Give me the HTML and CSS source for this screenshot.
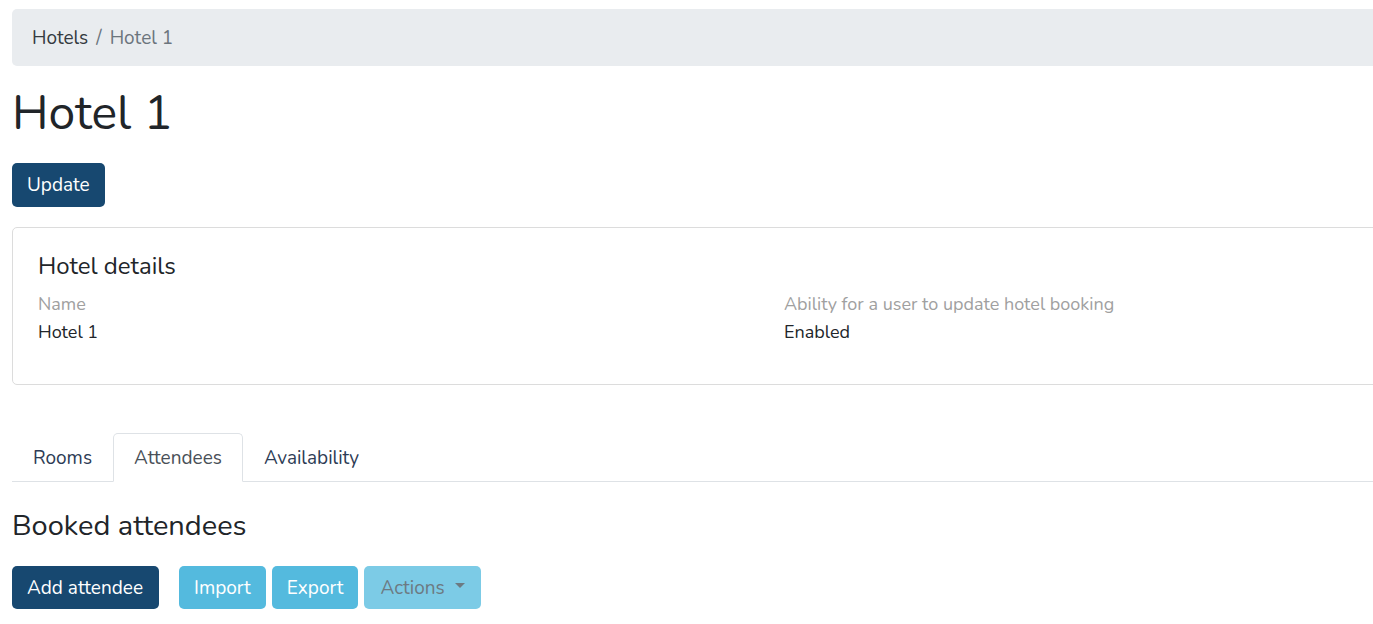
FILE: index.html
```html
<!DOCTYPE html>
<html>
<head>
    <title>Hotel 1</title>
    <link rel="stylesheet" href="styles.css">
</head>
<body>
    <div class="page">
        <nav class="breadcrumb">
            <a class="breadcrumb-link" href="#">Hotels</a>
            <span class="breadcrumb-sep">/</span>
            <span class="breadcrumb-current">Hotel 1</span>
        </nav>

        <h1 class="page-title">Hotel 1</h1>

        <div class="page-actions">
            <button class="btn btn-primary">Update</button>
        </div>

        <div class="card">
            <h2 class="card-title">Hotel details</h2>
            <div class="details-grid">
                <div class="detail">
                    <div class="detail-label">Name</div>
                    <div class="detail-value">Hotel 1</div>
                </div>
                <div class="detail">
                    <div class="detail-label">Ability for a user to update hotel booking</div>
                    <div class="detail-value">Enabled</div>
                </div>
            </div>
        </div>

        <ul class="tabs">
            <li class="tab">Rooms</li>
            <li class="tab tab-active">Attendees</li>
            <li class="tab">Availability</li>
        </ul>

        <h3 class="section-title">Booked attendees</h3>

        <div class="toolbar">
            <button class="btn btn-primary btn-wide">Add attendee</button>
            <div class="btn-group">
                <button class="btn btn-info">Import</button>
                <button class="btn btn-info">Export</button>
                <button class="btn btn-info btn-disabled">Actions <span class="caret"></span></button>
            </div>
        </div>
    </div>
</body>
</html>
```

FILE: styles.css
```css
:root {
    --text-color: #212529;
    --muted-color: #6c757d;
    --label-color: #a0a0a0;
    --primary: #174870;
    --info: #54bade;
    --border-color: #dee2e6;
    --border-radius: 5px;
}

html, body {
    margin: 0;
    padding: 0;
    overflow: hidden;
    background: #fff;
    font-family: 'Nunito', 'Open Sans', sans-serif;
    color: var(--text-color);
}

* {
    box-sizing: border-box;
}

/* the page is wider than the window; the right side is cut off */
.page {
    width: 1568px;
    padding: 9px 12px;
}

.breadcrumb {
    display: flex;
    align-items: center;
    gap: 8px;
    height: 57px;
    padding: 0 20px;
    background: #e9ecef;
    border-radius: var(--border-radius);
    font-size: 19px;
}

.breadcrumb-link {
    color: #343a40;
    text-decoration: none;
}

.breadcrumb-sep,
.breadcrumb-current {
    color: var(--muted-color);
}

.page-title {
    margin: 19px 0 20px 0;
    font-size: 48px;
    font-weight: 400;
    line-height: 1.2;
}

.btn {
    display: inline-flex;
    align-items: center;
    height: 44px;
    padding: 0 15px;
    border: none;
    border-radius: var(--border-radius);
    font-family: inherit;
    font-size: 19px;
    color: #fff;
    cursor: pointer;
}

.btn-wide {
    padding: 0 16px 0 15px;
}

.btn-primary {
    background: var(--primary);
}

.btn-info {
    background: var(--info);
}

.btn-disabled {
    background: #7ccbe6;
    color: #6c7a82;
    padding: 0 16px;
}

.caret {
    display: inline-block;
    margin-left: 10px;
    border-top: 5px solid #6c7a82;
    border-left: 5px solid transparent;
    border-right: 5px solid transparent;
    transform: translateY(-2px);
}

.card {
    margin-top: 20px;
    padding: 24px 25px 38px 25px;
    border: 1px solid #dcdcdc;
    border-radius: var(--border-radius);
}

.card-title {
    margin: 0 0 10px 0;
    font-size: 24px;
    font-weight: 400;
    line-height: 1.2;
}

.details-grid {
    display: grid;
    grid-template-columns: 1fr 1fr;
}

.detail-label {
    font-size: 18px;
    color: var(--label-color);
    line-height: 28px;
}

.detail-value {
    font-size: 18px;
    line-height: 28px;
}

.tabs {
    display: flex;
    margin: 48px 0 0 0;
    padding: 0;
    list-style: none;
    border-bottom: 1px solid var(--border-color);
}

.tab {
    height: 49px;
    display: flex;
    align-items: center;
    padding: 0 20px;
    margin-bottom: -1px;
    font-size: 19px;
    color: #2d3c55;
    border: 1px solid transparent;
    border-radius: var(--border-radius) var(--border-radius) 0 0;
}

.tab-active {
    color: #495057;
    background: #fff;
    border-color: var(--border-color) var(--border-color) #fff;
}

.section-title {
    margin: 27px 0 22px 0;
    font-size: 29px;
    font-weight: 400;
    line-height: 1.2;
}

.toolbar {
    display: flex;
    gap: 20px;
}

.btn-group {
    display: flex;
    gap: 6px;
}

.toolbar .btn {
    height: 43px;
}
```
